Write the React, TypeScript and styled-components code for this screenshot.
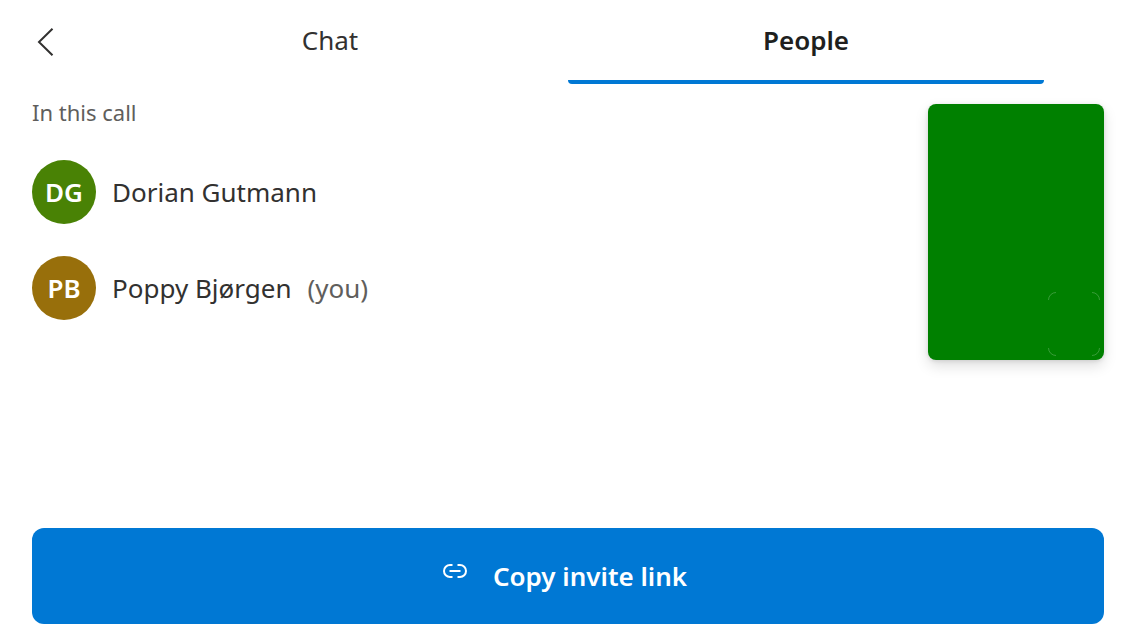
import React from "react";
import styled, { createGlobalStyle } from "styled-components";

const GlobalStyle = createGlobalStyle`
  *, *::before, *::after { box-sizing: border-box; }
  body {
    margin: 0;
    background: #ffffff;
    color: #323130;
    font-family: "Segoe UI", "Noto Sans", "Open Sans", sans-serif;
    font-size: 26px;
    line-height: 32px;
  }
  button { font: inherit; color: inherit; }
`;

const Pane = styled.div`
  min-height: 100vh;
  display: flex;
  flex-direction: column;
`;

const Header = styled.header`
  display: grid;
  grid-template-columns: 92px 1fr 92px;
  height: 84px;
`;

const BackButton = styled.button`
  display: flex;
  align-items: center;
  padding: 0 0 0 32px;
  border: 0;
  background: none;
`;

const TabList = styled.div`
  display: grid;
  grid-template-columns: 1fr 1fr;
`;

const Tab = styled.button<{ $selected?: boolean }>`
  padding: 0;
  border: 0;
  border-radius: 0 0 4px 4px;
  border-bottom: 4px solid ${(p) => (p.$selected ? "#0078d4" : "transparent")};
  background: none;
  color: ${(p) => (p.$selected ? "#201f1e" : "#323130")};
  font-weight: ${(p) => (p.$selected ? 600 : 400)};
`;

const Body = styled.main`
  position: relative;
  flex: 1;
  padding: 12px 32px 32px;
`;

const SectionTitle = styled.h2`
  margin: 0 0 16px;
  color: #605e5c;
  font-size: 22px;
  font-weight: 400;
`;

const People = styled.ul`
  margin: 0;
  padding: 0;
  list-style: none;
`;

const Person = styled.li`
  display: flex;
  align-items: center;
  gap: 16px;
  height: 96px;
`;

const Avatar = styled.span<{ $color: string }>`
  display: flex;
  align-items: center;
  justify-content: center;
  width: 64px;
  height: 64px;
  border-radius: 50%;
  background: ${(p) => p.$color};
  color: #ffffff;
  font-weight: 600;
`;

const Muted = styled.span`
  color: #605e5c;
`;

const LocalVideo = styled.section`
  position: absolute;
  top: 20px;
  right: 32px;
  width: 176px;
  height: 256px;
  border-radius: 8px;
  background: #008000;
  box-shadow: 0 6px 14px rgba(0, 0, 0, 0.13), 0 1px 4px rgba(0, 0, 0, 0.11);
`;

const CameraButton = styled.button`
  position: absolute;
  right: 4px;
  bottom: 4px;
  width: 52px;
  height: 64px;
  padding: 0;
  border: 0;
  background: none;

  svg { display: block; }
`;

const Footer = styled.footer`
  padding: 0 32px 16px;
`;

const InviteButton = styled.button`
  display: flex;
  align-items: center;
  justify-content: center;
  gap: 24px;
  width: 100%;
  height: 96px;
  padding: 0 8px 0 0;
  border: 0;
  border-radius: 12px;
  background: #0078d4;
  color: #ffffff;
  font-weight: 600;
`;

const LinkIcon = styled.svg`
  width: 28px;
  height: 28px;
  margin-bottom: 10px;
`;

const people = [
  { initials: "DG", name: "Dorian Gutmann", color: "#498205", you: false },
  { initials: "PB", name: "Poppy Bjørgen", color: "#986f0b", you: true },
];

export default function App() {
  return (
    <>
      <GlobalStyle />
      <Pane>
        <Header>
          <BackButton aria-label="Back">
            <svg width="28" height="28" viewBox="0 0 28 28" fill="none" stroke="#323130" strokeWidth="2">
              <path d="M20.5 .7 7 14l13.500 13.300" />
            </svg>
          </BackButton>
          <TabList role="tablist">
            <Tab role="tab" aria-selected={false}>Chat</Tab>
            <Tab role="tab" aria-selected $selected>People</Tab>
          </TabList>
        </Header>
        <Body>
          <SectionTitle>In this call</SectionTitle>
          <People>
            {people.map((p) => (
              <Person key={p.initials}>
                <Avatar $color={p.color}>{p.initials}</Avatar>
                <span>{p.name}</span>
                {p.you && <Muted>(you)</Muted>}
              </Person>
            ))}
          </People>
          <LocalVideo aria-label="Your video">
            <CameraButton aria-label="Switch camera">
              <svg width="52" height="64" viewBox="0 0 52 64" fill="none" stroke="#ffffff" strokeOpacity=".22">
                <path d="M.5 8a7.500 7.500 0 0 1 7.500-7.500M44 .5A7.500 7.500 0 0 1 51.500 8M51.500 56a7.500 7.500 0 0 1-7.500 7.500M8 63.500A7.500 7.500 0 0 1 .5 56" />
              </svg>
            </CameraButton>
          </LocalVideo>
        </Body>
        <Footer>
          <InviteButton>
            <LinkIcon viewBox="0 0 28 28" fill="none" stroke="#ffffff" strokeWidth="2" aria-hidden="true">
              <path d="M11.500 8H9a6 6 0 0 0 0 12h2.500M16.500 8H19a6 6 0 0 1 0 12h-2.500M8.500 14h11" />
            </LinkIcon>
            <span>Copy invite link</span>
          </InviteButton>
        </Footer>
      </Pane>
    </>
  );
}
